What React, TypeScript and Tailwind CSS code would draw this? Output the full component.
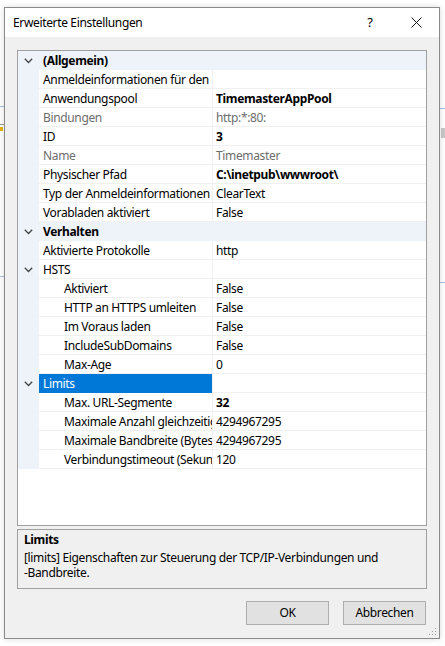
import React from "react";

type Row =
  | { kind: "cat"; label: string }
  | { kind: "sub"; label: string; selected?: boolean }
  | { kind: "prop"; name: string; value: string; bold?: boolean; gray?: boolean; indent?: boolean };

const rows: Row[] = [
  { kind: "cat", label: "(Allgemein)" },
  { kind: "prop", name: "Anmeldeinformationen für den", value: "" },
  { kind: "prop", name: "Anwendungspool", value: "TimemasterAppPool", bold: true },
  { kind: "prop", name: "Bindungen", value: "http:*:80:", gray: true },
  { kind: "prop", name: "ID", value: "3", bold: true },
  { kind: "prop", name: "Name", value: "Timemaster", gray: true },
  { kind: "prop", name: "Physischer Pfad", value: "C:\\inetpub\\wwwroot\\", bold: true },
  { kind: "prop", name: "Typ der Anmeldeinformationen", value: "ClearText" },
  { kind: "prop", name: "Vorabladen aktiviert", value: "False" },
  { kind: "cat", label: "Verhalten" },
  { kind: "prop", name: "Aktivierte Protokolle", value: "http" },
  { kind: "sub", label: "HSTS" },
  { kind: "prop", name: "Aktiviert", value: "False", indent: true },
  { kind: "prop", name: "HTTP an HTTPS umleiten", value: "False", indent: true },
  { kind: "prop", name: "Im Voraus laden", value: "False", indent: true },
  { kind: "prop", name: "IncludeSubDomains", value: "False", indent: true },
  { kind: "prop", name: "Max-Age", value: "0", indent: true },
  { kind: "sub", label: "Limits", selected: true },
  { kind: "prop", name: "Max. URL-Segmente", value: "32", bold: true, indent: true },
  { kind: "prop", name: "Maximale Anzahl gleichzeitiger Verbindungen", value: "4294967295", indent: true },
  { kind: "prop", name: "Maximale Bandbreite (Bytes/Sekunde)", value: "4294967295", indent: true },
  { kind: "prop", name: "Verbindungstimeout (Sekunden)", value: "120", indent: true },
];

function Chevron() {
  return (
    <svg width="9" height="6" viewBox="0 0 9 6" className="block">
      <polyline points="0.8,0.8 4.5,4.5 8.2,0.8" fill="none" stroke="#444" strokeWidth="1.3" />
    </svg>
  );
}

function GridRow({ row }: { row: Row }) {
  if (row.kind === "cat") {
    return (
      <div className="flex h-[19px] bg-[#eef3fa]">
        <div className="w-[21px] flex items-center justify-center">
          <Chevron />
        </div>
        <div className="flex-1 pl-[4px] font-bold leading-[20px] text-black">{row.label}</div>
      </div>
    );
  }
  if (row.kind === "sub") {
    return (
      <div className="flex h-[19px]">
        <div className="w-[21px] bg-[#eef3fa] flex items-center justify-center">
          <Chevron />
        </div>
        <div
          className={
            row.selected
              ? "w-[174px] border-r border-[#f0f0f0] bg-[#0078d7] pl-[4px] leading-[20px] text-white"
              : "w-[174px] border-r border-b border-[#f0f0f0] pl-[4px] leading-[20px] text-black"
          }
        >
          {row.label}
        </div>
        <div className="flex-1 border-b border-[#f0f0f0]" />
      </div>
    );
  }
  const color = row.gray ? "text-[#6d6d6d]" : "text-black";
  return (
    <div className="flex h-[19px]">
      <div className="w-[21px] bg-[#eef3fa]" />
      <div
        className={`w-[174px] border-r border-b border-[#f0f0f0] leading-[20px] whitespace-nowrap overflow-hidden ${
          row.indent ? "pl-[25px]" : "pl-[4px]"
        } ${color}`}
      >
        {row.name}
      </div>
      <div
        className={`flex-1 border-b border-[#f0f0f0] pl-[3px] leading-[20px] whitespace-nowrap overflow-hidden ${color} ${
          row.bold ? "font-bold" : ""
        }`}
      >
        {row.value}
      </div>
    </div>
  );
}

export default function App() {
  return (
    <div
      className="relative w-[445px] h-[646px] overflow-hidden bg-white pt-[7px] pl-[4px] text-[12px] tracking-[-0.35px]"
      style={{ fontFamily: '"Noto Sans", "Segoe UI", sans-serif' }}
    >
      {/* desktop peeks */}
      <div className="absolute left-0 top-[106px] w-[4px] h-[1px] bg-[#a9c1e0]" />
      <div className="absolute left-0 top-[124px] w-[4px] h-[1px] bg-[#9a9a9a]" />
      <div className="absolute left-0 top-[127px] w-[3px] h-[4px] bg-[#e8b400]" />
      <div className="absolute left-0 top-[276px] w-[4px] h-[1px] bg-[#a9c1e0]" />
      <div className="absolute right-0 top-[108px] w-[5px] h-[1px] bg-[#a9c1e0]" />
      <div className="absolute right-0 top-[128px] w-[4px] h-[10px] bg-[#c8c8c8]" />
      <div className="absolute right-0 top-[282px] w-[5px] h-[1px] bg-[#a9c1e0]" />

      <div className="relative w-[436px] h-[632px] border border-[#8a8a8a] bg-[#f0f0f0] flex flex-col shadow-[0_0_6px_rgba(0,0,0,0.15)]">
        {/* title bar */}
        <div className="h-[29px] bg-white flex items-center pl-[8px] text-black">
          <span className="flex-1 text-[12px]">Erweiterte Einstellungen</span>
          <span className="w-[46px] text-center text-[13px]">?</span>
          <span className="w-[46px] flex justify-center">
            <svg width="11" height="11" viewBox="0 0 11 11">
              <path d="M0.5 0.5 L10.5 10.5 M10.5 0.5 L0.5 10.5" stroke="#111" strokeWidth="1" />
            </svg>
          </span>
        </div>

        {/* body */}
        <div className="flex-1 flex flex-col pl-[12px] pr-[12px] pt-[13px]">
          {/* property grid */}
          <div className="w-[410px] h-[476px] border border-[#a0a0a0] bg-white flex flex-col">
            {rows.map((r, i) => (
              <GridRow key={i} row={r} />
            ))}
          </div>

          {/* description */}
          <div className="mt-[3px] w-[410px] h-[60px] border border-[#a0a0a0] bg-[#f0f0f0] px-[6px] pt-[2px] text-black leading-[15px]">
            <div className="font-bold mb-[3px]">Limits</div>
            <div>[limits] Eigenschaften zur Steuerung der TCP/IP-Verbindungen und</div>
            <div>-Bandbreite.</div>
          </div>

          {/* buttons */}
          <div className="mt-[12px] flex justify-end gap-[14px] pr-[1px]">
            <button className="w-[83px] h-[24px] bg-[#e1e1e1] border border-[#adadad] text-black text-[12px]">
              OK
            </button>
            <button className="w-[83px] h-[24px] bg-[#e1e1e1] border border-[#adadad] text-black text-[12px]">
              Abbrechen
            </button>
          </div>
        </div>

        {/* resize grip */}
        <svg className="absolute right-[2px] bottom-[2px]" width="9" height="9" viewBox="0 0 9 9">
          <rect x="7" y="1" width="1" height="1" fill="#a0a0a0" />
          <rect x="4" y="4" width="1" height="1" fill="#a0a0a0" />
          <rect x="7" y="4" width="1" height="1" fill="#a0a0a0" />
          <rect x="1" y="7" width="1" height="1" fill="#a0a0a0" />
          <rect x="4" y="7" width="1" height="1" fill="#a0a0a0" />
          <rect x="7" y="7" width="1" height="1" fill="#a0a0a0" />
        </svg>
      </div>
    </div>
  );
}
